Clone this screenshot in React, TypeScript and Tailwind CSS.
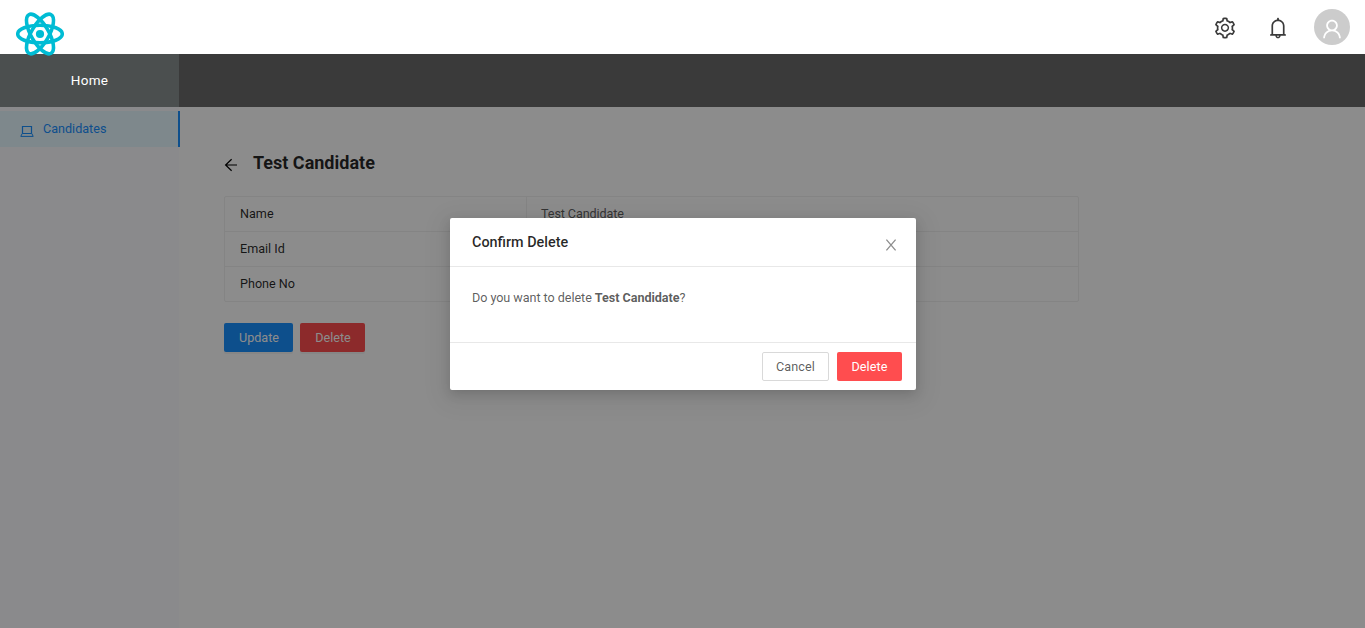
import React from "react";
import { AiOutlineBell, AiOutlineSetting, AiOutlineUser } from "react-icons/ai";

function Logo() {
  return (
    <svg viewBox="0 0 48 48" className="mt-[10px] size-12 shrink-0" fill="none" stroke="#00bcd4" strokeWidth="3.6">
      <ellipse cx="24" cy="24" rx="22.3" ry="8.8" />
      <ellipse cx="24" cy="24" rx="22.3" ry="8.8" transform="rotate(60 24 24)" />
      <ellipse cx="24" cy="24" rx="22.3" ry="8.8" transform="rotate(120 24 24)" />
      <circle cx="24" cy="24" r="4.1" fill="#00bcd4" stroke="none" />
    </svg>
  );
}

function LaptopIcon() {
  return (
    <svg viewBox="0 0 14 14" className="mr-[9px] mt-1 size-[14px]" fill="none" stroke="currentColor">
      <path d="M2.5 9.5V2.5H11.5V9.5" strokeWidth="1.2" />
      <path d="M2.2 9.5H11.8L13.2 12.4H0.8Z" strokeLinejoin="round" />
    </svg>
  );
}

function ArrowLeftIcon() {
  return (
    <svg viewBox="0 0 14 14" className="mt-[3px] size-[14px] text-black" fill="none" stroke="currentColor" strokeWidth="1.2">
      <path d="M13 7H2M7.6 1.3L1.6 7L7.6 12.7" />
    </svg>
  );
}

function CloseIcon() {
  return (
    <svg viewBox="0 0 14 14" className="mt-[6px] size-[14px] text-black/45" fill="none" stroke="currentColor" strokeWidth="1.3">
      <path d="M2.4 1.6L11.6 12.4M11.6 1.6L2.4 12.4" />
    </svg>
  );
}

function Header() {
  return (
    <header className="relative z-20 flex h-[54px] items-start justify-between bg-white pl-4 pr-[15px]">
      <Logo />
      <div className="flex text-[#3a3a3a]">
        <AiOutlineSetting className="mr-[29px] mt-4 size-6" />
        <AiOutlineBell className="mr-6 mt-4 size-6" />
        <div className="mt-[9px] flex size-9 items-center justify-center rounded-full bg-[#ccc] text-white">
          <AiOutlineUser className="mt-[3px] size-6" />
        </div>
      </div>
    </header>
  );
}

function TopNav() {
  return (
    <nav className="relative z-10 flex h-[53px] bg-[#3a3a3a]">
      <a className="flex w-[179px] items-center justify-center bg-[#4b4f4f] text-[13.5px] tracking-[0.3px] text-white">
        Home
      </a>
    </nav>
  );
}

function Sidebar() {
  return (
    <aside className="w-[180px] shrink-0 pt-1">
      <a className="flex h-9 items-center border-r-2 border-[#1890ff] bg-[#e6f7ff] pl-5 text-[12.6px] text-[#1890ff]">
        <LaptopIcon />
        Candidates
      </a>
    </aside>
  );
}

const rows = [
  { label: "Name", value: "Test Candidate" },
  { label: "Email Id", value: "" },
  { label: "Phone No", value: "" },
];

function Details() {
  return (
    <main className="flex flex-col pl-11 pt-[42px]">
      <div className="flex h-7 items-center">
        <ArrowLeftIcon />
        <h1 className="ml-[15px] text-lg font-bold leading-7 text-black/85">Test Candidate</h1>
      </div>
      <div className="mt-[19px] w-[855px] rounded-xs border border-[#f0f0f0] text-[12.6px]">
        {rows.map((row) => (
          <div key={row.label} className="flex h-[35px] items-center border-b border-[#f0f0f0] last:h-[34px] last:border-b-0">
            <div className="flex h-full w-[302px] items-center border-r border-[#f0f0f0] pl-[15px] text-black/85">
              {row.label}
            </div>
            <div className="pl-[14px] tracking-[-0.1px] text-black/65">{row.value}</div>
          </div>
        ))}
      </div>
      <div className="mt-[21px] flex gap-[7px] text-[12.6px] text-white">
        <button className="h-[29px] w-[69px] rounded-xs bg-[#1890ff] pl-px pt-0.5 shadow-[0_2px_0_rgba(0,0,0,0.045)]">Update</button>
        <button className="h-[29px] w-[65px] rounded-xs bg-[#ff4d4f] pl-px pt-0.5 shadow-[0_2px_0_rgba(0,0,0,0.045)]">Delete</button>
      </div>
    </main>
  );
}

function ConfirmDialog() {
  return (
    <div
      role="dialog"
      className="absolute left-[450px] top-[218px] z-30 flex h-[172px] w-[466px] flex-col rounded-xs bg-white text-[12.6px] text-black/65 shadow-[0_4px_12px_rgba(0,0,0,0.15),0_6px_24px_8px_rgba(0,0,0,0.05)]"
    >
      <div className="flex h-[49px] items-center justify-between border-b border-[#e8e8e8] pl-[22px] pr-[18px]">
        <h2 className="pt-0.5 text-[14.4px] font-medium text-black/85">Confirm Delete</h2>
        <CloseIcon />
      </div>
      <p className="flex-1 pl-[22px] pt-[21px] leading-5 tracking-[-0.05px]">
        Do you want to delete <b>Test Candidate</b>?
      </p>
      <div className="flex h-12 items-center justify-end gap-2 border-t border-[#e8e8e8] pr-[14px] tracking-[0.1px]">
        <button className="h-[29px] w-[67px] rounded-xs border border-[#d9d9d9] pt-0.5">Cancel</button>
        <button className="h-[29px] w-[65px] rounded-xs bg-[#ff4d4f] pt-0.5 text-white">Delete</button>
      </div>
    </div>
  );
}

export default function App() {
  return (
    <div className="relative flex h-[628px] w-[1365px] flex-col overflow-hidden bg-white font-['Roboto',sans-serif]">
      <Header />
      <TopNav />
      <div className="flex flex-1 bg-[linear-gradient(to_right,#fbfbff_179px,#ffffff_179px)]">
        <Sidebar />
        <Details />
      </div>
      <div className="absolute inset-0 bg-black/45" />
      <ConfirmDialog />
    </div>
  );
}
